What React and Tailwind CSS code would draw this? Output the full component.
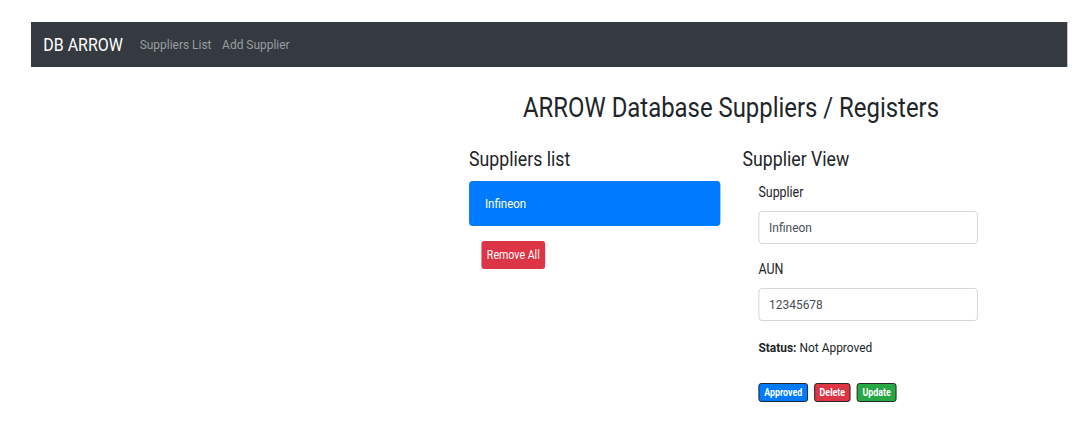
export default function App() {
  return (
    <div className="w-[1087px] h-[438px] overflow-hidden bg-white">
      <div
        className="w-[1228px] origin-top-left scale-x-[0.885] text-[#212529]"
        style={{ fontFamily: "Roboto, 'Liberation Sans', sans-serif" }}
      >
        <div className="pt-[22px] pl-[35px] pr-[22px]">
          <nav className="h-[45px] bg-[#343a40] flex items-center pl-[14px]">
            <span className="text-white text-[18px] mr-[19px]">DB ARROW</span>
            <span className="text-[#9a9da0] text-[13.5px] mr-[12px]">Suppliers List</span>
            <span className="text-[#9a9da0] text-[13.5px]">Add Supplier</span>
          </nav>
        </div>
        <div className="pl-[530px]">
          <h1 className="text-[27px] leading-none mt-[28px] ml-[61px] text-[#212529]">ARROW Database Suppliers / Registers</h1>
          <div className="flex mt-[27px]">
            <div className="w-[309px]">
              <h2 className="text-[20px] leading-none">Suppliers list</h2>
              <div className="mt-[12px] w-[284px] h-[45px] bg-[#007bff] rounded-[4px] text-white text-[13px] flex items-center pl-[18px]">Infineon</div>
              <button className="mt-[15px] ml-[14px] w-[72px] h-[28px] bg-[#dc3545] rounded-[3px] text-white text-[12px] leading-none">Remove All</button>
            </div>
            <div className="w-[280px]">
              <h2 className="text-[20px] leading-none">Supplier View</h2>
              <div className="pl-[18px]">
                <div className="mt-[16px] text-[14px] leading-[14px]">Supplier</div>
                <div className="mt-[12px] w-[248px] h-[33px] border border-[#ced4da] rounded-[4px] text-[13.5px] text-[#495057] flex items-center pl-[11px]">Infineon</div>
                <div className="mt-[18px] text-[14px] leading-[14px]">AUN</div>
                <div className="mt-[12px] w-[248px] h-[33px] border border-[#ced4da] rounded-[4px] text-[13.5px] text-[#495057] flex items-center pl-[11px]">12345678</div>
                <div className="mt-[20px] text-[13.5px] leading-[13px]"><b className="font-bold">Status:</b> Not Approved</div>
                <div className="mt-[29px] flex gap-[7px]">
                  <button className="w-[56px] h-[19px] bg-[#007bff] border border-[#1b1e21] rounded-[3px] text-white text-[10px] font-bold leading-none">Approved</button>
                  <button className="w-[41px] h-[19px] bg-[#dc3545] border border-[#1b1e21] rounded-[3px] text-white text-[10px] font-bold leading-none">Delete</button>
                  <button className="w-[45px] h-[19px] bg-[#28a745] border border-[#1b1e21] rounded-[3px] text-white text-[10px] font-bold leading-none">Update</button>
                </div>
              </div>
            </div>
          </div>
        </div>
      </div>
    </div>
  );
}
